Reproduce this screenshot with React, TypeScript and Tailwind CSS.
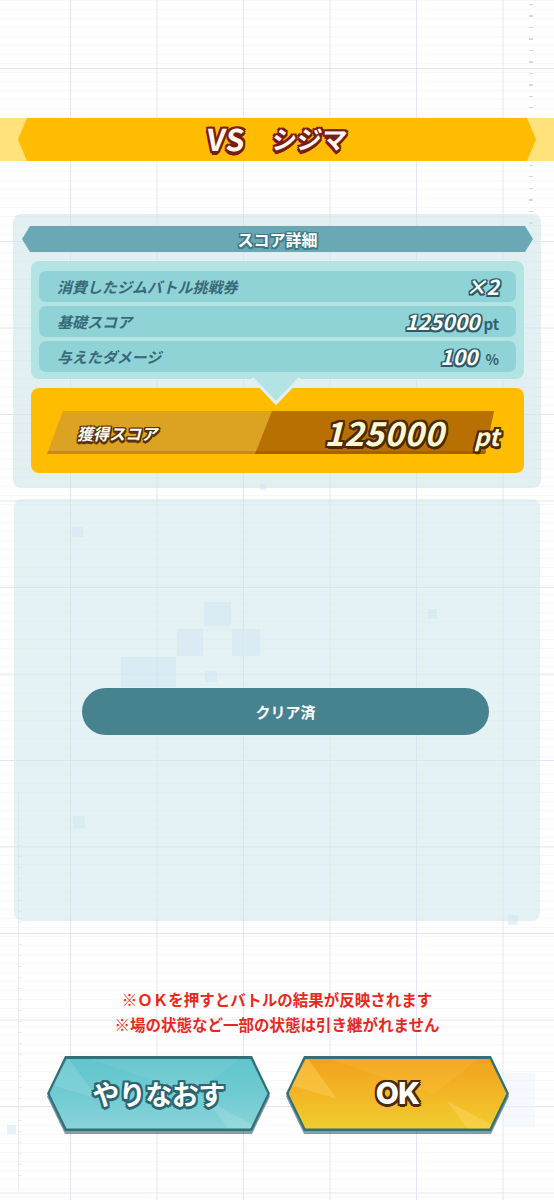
import React from "react";

const JP = "font-['Noto_Sans_CJK_JP','Noto_Sans',sans-serif]";

const TITLE_SH =
  "[text-shadow:-2px_-2px_0_#7a1c15,0_-2px_0_#7a1c15,2px_-2px_0_#7a1c15,2px_0_0_#7a1c15,2px_2px_0_#7a1c15,0_2px_0_#7a1c15,-2px_2px_0_#7a1c15,-2px_0_0_#7a1c15,1px_3px_0_#7a1c15,0_4px_0_#7a1c15]";
const TEAL_SH =
  "[text-shadow:-1.5px_-1.5px_0_#3f7c88,0_-1.5px_0_#3f7c88,1.5px_-1.5px_0_#3f7c88,1.5px_0_0_#3f7c88,1.5px_1.5px_0_#3f7c88,0_1.5px_0_#3f7c88,-1.5px_1.5px_0_#3f7c88,-1.5px_0_0_#3f7c88]";
const VAL_SH =
  "[text-shadow:-1.5px_-1.5px_0_#2c5b67,0_-1.5px_0_#2c5b67,1.5px_-1.5px_0_#2c5b67,1.5px_0_0_#2c5b67,1.5px_1.5px_0_#2c5b67,0_1.5px_0_#2c5b67,-1.5px_1.5px_0_#2c5b67,-1.5px_0_0_#2c5b67]";
const BROWN_SH =
  "[text-shadow:-1.5px_-1.5px_0_#5a3205,0_-1.5px_0_#5a3205,1.5px_-1.5px_0_#5a3205,1.5px_0_0_#5a3205,1.5px_1.5px_0_#5a3205,0_1.5px_0_#5a3205,-1.5px_1.5px_0_#5a3205,-1.5px_0_0_#5a3205,0_2.5px_0_#5a3205]";
const BIG_SH =
  "[text-shadow:-2px_-2px_0_#4a2904,0_-2px_0_#4a2904,2px_-2px_0_#4a2904,2px_0_0_#4a2904,2px_2px_0_#4a2904,0_2px_0_#4a2904,-2px_2px_0_#4a2904,-2px_0_0_#4a2904,1px_3px_0_#4a2904]";
const BTN_TEAL_SH =
  "[text-shadow:-2px_-2px_0_#2b6570,0_-2px_0_#2b6570,2px_-2px_0_#2b6570,2px_0_0_#2b6570,2px_2px_0_#2b6570,0_2px_0_#2b6570,-2px_2px_0_#2b6570,-2px_0_0_#2b6570,0_3px_0_#2b6570]";
const BTN_OK_SH =
  "[text-shadow:-2px_-2px_0_#4a2a0c,0_-2px_0_#4a2a0c,2px_-2px_0_#4a2a0c,2px_0_0_#4a2a0c,2px_2px_0_#4a2a0c,0_2px_0_#4a2a0c,-2px_2px_0_#4a2a0c,-2px_0_0_#4a2a0c,0_3px_0_#4a2a0c]";

function Row({ label, children }: { label: string; children: React.ReactNode }) {
  return (
    <div className="flex h-[31px] items-center justify-between rounded-[7px] bg-[#8fd3d7] pl-[18px] pr-[17px]">
      <span className="text-[15px] font-bold italic text-[#376977] leading-none">{label}</span>
      <span className="flex items-baseline gap-[4px] leading-none">{children}</span>
    </div>
  );
}

function Square({ cls }: { cls: string }) {
  return <div className={`absolute bg-[#d3e6f4]/55 ${cls}`} />;
}

function HexButton({
  label,
  variant,
}: {
  label: string;
  variant: "teal" | "ok";
}) {
  const teal = variant === "teal";
  return (
    <div className="relative h-[78px] w-[223px]">
      <div className="absolute inset-x-0 top-[3px] bottom-0 bg-[#2f5f68]/60 [clip-path:polygon(18px_0,calc(100%_-_18px)_0,100%_50%,calc(100%_-_18px)_100%,18px_100%,0_50%)]" />
      <div className="absolute inset-x-0 top-0 bottom-[3px] bg-[#336e79] [clip-path:polygon(18px_0,calc(100%_-_18px)_0,100%_50%,calc(100%_-_18px)_100%,18px_100%,0_50%)]" />
      <div
        className={`absolute left-[2.5px] right-[2.5px] top-[2.5px] bottom-[5.5px] overflow-hidden [clip-path:polygon(17px_0,calc(100%_-_17px)_0,100%_50%,calc(100%_-_17px)_100%,17px_100%,0_50%)] ${
          teal
            ? "bg-[linear-gradient(to_bottom,#62c5cd_0%,#6fcbd2_50%,#8ad4d9_100%)]"
            : "bg-[linear-gradient(to_bottom,#f2a21e_0%,#f3b625_50%,#efcd30_100%)]"
        }`}
      >
        <div
          className={`absolute left-0 top-0 h-[40px] w-[48px] [clip-path:polygon(0_65%,40%_0,100%_100%)] ${
            teal ? "bg-white/12" : "bg-[#ffd25a]/45"
          }`}
        />
        <div
          className={`absolute left-[40px] top-0 h-[36px] w-[150px] [clip-path:polygon(0_0,100%_0,70%_100%)] ${
            teal ? "bg-white/6" : "bg-[#ffc64a]/20"
          }`}
        />
        <div
          className={`absolute right-[8px] bottom-0 h-[40px] w-[52px] [clip-path:polygon(0_30%,100%_100%,40%_100%)] ${
            teal ? "bg-white/12" : "bg-[#ffd860]/45"
          }`}
        />
      </div>
      <div className="relative flex h-full items-center justify-center pb-[4px]">
        {teal ? (
          <span className={`text-[27px] font-bold leading-none text-white tracking-[-0.5px] ${BTN_TEAL_SH}`}>{label}</span>
        ) : (
          <span className={`font-['Inter','Noto_Sans',sans-serif] text-[30px] font-extrabold leading-none text-white tracking-[-1px] ${BTN_OK_SH}`}>{label}</span>
        )}
      </div>
    </div>
  );
}

export default function App() {
  return (
    <div
      className={`relative h-[1200px] w-[554px] overflow-hidden bg-white ${JP} [background-image:linear-gradient(to_right,#e4e4f6_1px,transparent_1px),linear-gradient(to_bottom,#e4e4f6_1px,transparent_1px),repeating-linear-gradient(to_bottom,#f8f8fc_0px,#f8f8fc_1px,transparent_1px,transparent_9px)] [background-size:86.5px_86.5px,86.5px_86.5px,100%_100%] [background-position:70px_68px,70px_68px,0_0]`}
    >
      {/* decorative ticks & squares */}
      <div className="absolute left-[529px] top-[4px] h-[240px] w-[4px] [background-image:repeating-linear-gradient(to_bottom,#d6d7e2_0px,#d6d7e2_1px,transparent_1px,transparent_11.5px)]" />
      <div className="absolute left-[18px] top-[790px] h-[400px] w-[1px] bg-[#eceef6]" />
      <div className="absolute left-[18px] top-[845px] h-[340px] w-[4px] [background-image:repeating-linear-gradient(to_bottom,#e8e9f2_0px,#e8e9f2_1px,transparent_1px,transparent_11px)]" />
      <Square cls="left-[260px] top-[484px] h-[6px] w-[6px]" />
      <Square cls="left-[7px] top-[1125px] h-[9px] w-[9px]" />
      <div className="absolute left-[502px] top-[1073px] h-[54px] w-[33px] bg-[#eef3fa]/60" />

      <div className="relative flex flex-col pt-[118px]">
        {/* header banner */}
        <div className="h-[43px] bg-[#ffe27a] px-[18px]">
          <div className="flex h-full items-center justify-center bg-[#ffbc00] [clip-path:polygon(9px_0,calc(100%_-_9px)_0,100%_50%,calc(100%_-_9px)_100%,9px_100%,0_50%)]">
            <div className="flex items-center gap-[26px] pb-[3px] font-bold text-[#fff9ec] leading-none">
              <span className={`-skew-x-6 text-[30px] tracking-[1px] ${TITLE_SH}`}>VS</span>
              <span className={`-skew-x-6 text-[25px] ${TITLE_SH}`}>シジマ</span>
            </div>
          </div>
        </div>

        {/* score panel */}
        <div className="relative mx-[13px] mt-[53px] rounded-[8px] bg-[#cfe6ea]/60 pl-[9px] pr-[8px] pt-[12px] pb-[15px]">
          <div className="flex h-[26px] items-center justify-center bg-[#6aa8b5] [clip-path:polygon(8px_0,calc(100%_-_8px)_0,100%_50%,calc(100%_-_8px)_100%,8px_100%,0_50%)]">
            <span className={`text-[16px] font-bold leading-none text-white ${TEAL_SH}`}>スコア詳細</span>
          </div>

          <div className="mx-[9px] mt-[9px] flex flex-col gap-[4px] rounded-[8px] bg-[#b4e3e4] px-[8px] pt-[10px] pb-[7px]">
            <Row label="消費したジムバトル挑戦券">
              <span className={`text-[21px] font-bold italic text-white ${VAL_SH}`}>×2</span>
            </Row>
            <Row label="基礎スコア">
              <span className={`text-[21px] font-bold italic text-white ${VAL_SH}`}>125000</span>
              <span className="text-[15px] font-bold text-[#2f6270]">pt</span>
            </Row>
            <Row label="与えたダメージ">
              <span className={`text-[21px] font-bold italic text-white ${VAL_SH}`}>100</span>
              <span className="pl-[4px] text-[14px] font-bold text-[#2f6270]">%</span>
            </Row>
          </div>

          {/* pointer */}
          <svg className="absolute left-[239px] top-[164px] z-10" width="48" height="28" viewBox="0 0 48 28">
            <polygon points="0,0 48,0 24,25" fill="#b4e3e4" />
            <polyline points="0,0 24,25 48,0" fill="none" stroke="#e0eff1" strokeWidth="3" />
          </svg>

          {/* total score */}
          <div className="mx-[9px] mt-[9px] h-[85px] rounded-[8px] bg-[#ffbc00] px-[16px] pt-[23px]">
            <div className="relative flex h-[43px] items-center justify-between">
              <div className="absolute left-0 top-0 bottom-0 right-[14px] bg-[#dca221] shadow-[inset_0_-3px_0_#c98a12] [clip-path:polygon(16px_0,100%_0,calc(100%_-_9px)_100%,0_100%)]">
                <div className="absolute inset-0 bg-[#b87002] shadow-[inset_0_-3px_0_#a46200] [clip-path:polygon(225px_0,100%_0,100%_100%,208px_100%)]" />
              </div>
              <span className={`relative pl-[30px] text-[16px] font-bold italic leading-none text-white ${BROWN_SH}`}>獲得スコア</span>
              <div className="relative flex items-baseline gap-[30px] pr-[9px] leading-none">
                <span className={`text-[33px] font-bold italic text-[#fff8d2] tracking-[0.5px] ${BIG_SH}`}>125000</span>
                <span className={`text-[24px] font-bold italic text-[#fff8d2] ${BIG_SH}`}>pt</span>
              </div>
            </div>
          </div>
        </div>

        {/* cleared panel */}
        <div className="relative mx-[14px] mt-[11px] h-[422px] rounded-[8px] bg-[#cfe7ea]/55 pt-[189px]">
          <Square cls="left-[58px] top-[28px] h-[10px] w-[11px]" />
          <Square cls="left-[190px] top-[103px] h-[24px] w-[27px]" />
          <Square cls="left-[163px] top-[130px] h-[27px] w-[26px]" />
          <Square cls="left-[218px] top-[130px] h-[27px] w-[28px]" />
          <Square cls="left-[107px] top-[158px] h-[30px] w-[55px]" />
          <Square cls="left-[191px] top-[172px] h-[11px] w-[12px]" />
          <Square cls="left-[414px] top-[110px] h-[10px] w-[9px]" />
          <Square cls="left-[59px] top-[317px] h-[12px] w-[12px]" />
          <Square cls="left-[494px] top-[416px] h-[10px] w-[10px]" />
          <div className="relative ml-[68px] flex h-[47px] w-[407px] items-center justify-center rounded-full bg-[#46838f]">
            <span className="text-[15px] font-bold leading-none text-white">クリア済</span>
          </div>
        </div>

        {/* notes */}
        <div className="mt-[66px] text-center text-[15.5px] font-bold leading-[25px] text-[#e5291f]">
          <p>※ＯＫを押すとバトルの結果が反映されます</p>
          <p>※場の状態など一部の状態は引き継がれません</p>
        </div>

        {/* buttons */}
        <div className="mt-[19px] flex gap-[16px] pl-[47px]">
          <HexButton label="やりなおす" variant="teal" />
          <HexButton label="OK" variant="ok" />
        </div>
      </div>
    </div>
  );
}
